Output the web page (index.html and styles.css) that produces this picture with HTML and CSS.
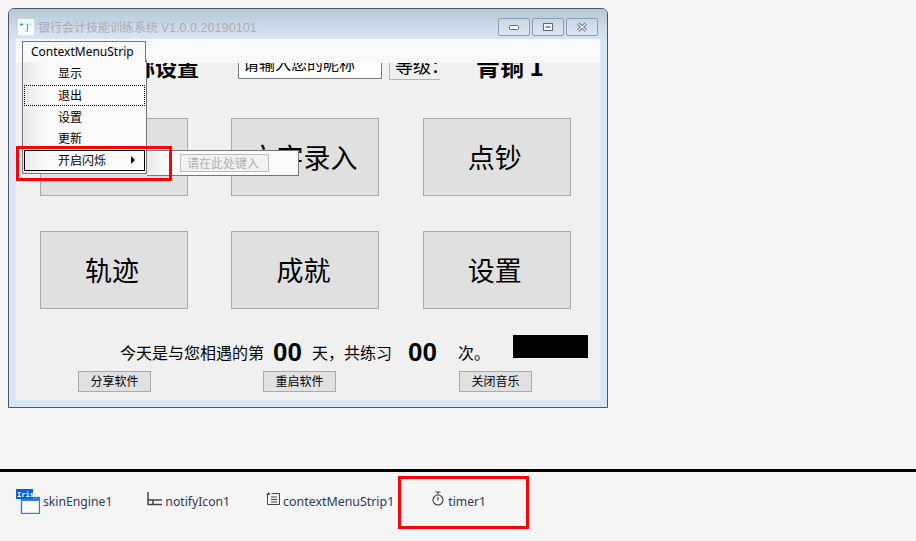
FILE: index.html
```html
<!DOCTYPE html>
<html lang="zh">
<head>
<meta charset="utf-8">
<title>银行会计技能训练系统</title>
<link rel="stylesheet" href="styles.css">
</head>
<body>
<main class="designer">
  <section class="window">
    <header class="titlebar">
      <svg class="logo" width="16" height="16" viewBox="0 0 16 16"><rect width="16" height="16" fill="#fff"/><path d="M2 5.500h3M3.500 4v3M8 5h1.500v7h-2M12.500 4.500l-.5 1.500" stroke="#19b5b5" stroke-width="1" fill="none"/></svg>
      <span class="title">银行会计技能训练系统 <span class="ver">V1.0.0.20190101</span></span>
      <div class="controls">
        <div class="ctl"><svg width="12" height="8" viewBox="0 0 12 8"><rect x="1.5" y="2.5" width="9" height="4" fill="#fff" stroke="#5b6b7d" rx="1"/></svg></div>
        <div class="ctl"><svg width="12" height="10" viewBox="0 0 12 10"><rect x="1.5" y="1.5" width="9" height="7" fill="#f4f6f8" stroke="#5b6b7d"/><rect x="3.5" y="4" width="5" height="2" fill="#8a98a8"/></svg></div>
        <div class="ctl"><svg width="12" height="10" viewBox="0 0 12 10"><path d="M2 1.500l8 7M10 1.500l-8 7" stroke="#5b6b7d" stroke-width="3"/><path d="M2 1.500l8 7M10 1.500l-8 7" stroke="#f4f6f8" stroke-width="1.200"/></svg></div>
      </div>
    </header>
    <div class="client">
      <div class="head-row">
        <h1 class="heading">昵称设置</h1>
        <div class="nick">请输入您的昵称</div>
        <div class="level-btn">等级：</div>
        <div class="level">青铜 1</div>
      </div>
      <div class="tiles">
        <div class="tile">打字</div>
        <div class="tile">文字录入</div>
        <div class="tile">点钞</div>
        <div class="tile">轨迹</div>
        <div class="tile">成就</div>
        <div class="tile">设置</div>
      </div>
      <div class="stats">
        <span class="s-a">今天是与您相遇的第</span>
        <b class="num n-a">00</b>
        <span class="s-b">天，共练习</span>
        <b class="num n-b">00</b>
        <span class="s-c">次。</span>
        <div class="black"></div>
      </div>
      <div class="actions">
        <div class="act">分享软件</div>
        <div class="act">重启软件</div>
        <div class="act">关闭音乐</div>
      </div>
      <div class="strip"></div>
    </div>
  </section>

  <div class="menu">
    <div class="item">显示</div>
    <div class="item dotted">退出</div>
    <div class="item">设置</div>
    <div class="item">更新</div>
    <div class="item active">开启闪烁<span class="arrow"></span></div>
  </div>
  <div class="menu-tab">ContextMenuStrip</div>
  <div class="submenu"><div class="typehere">请在此处键入</div></div>
  <div class="red red-a"></div>
</main>
<footer class="tray">
  <div class="comp c-skin">
    <svg width="24" height="25" viewBox="0 0 24 25"><rect x="5.500" y="8.500" width="18" height="16" fill="#fff" stroke="#2d7de8" stroke-width="1.400"/><rect x="5" y="8" width="19" height="4" fill="#2d7de8"/><rect x="0" y="0" width="17" height="10" fill="#0a5fe0"/><text x="1" y="8" class="iris">Iris</text></svg>
    <span>skinEngine1</span>
  </div>
  <div class="comp c-notify">
    <svg width="15" height="14" viewBox="0 0 15 14"><path d="M1 0v13M1 8h14M1 12.500h14M6 8v4" stroke="#444" stroke-width="1.500" fill="none"/></svg>
    <span>notifyIcon1</span>
  </div>
  <div class="comp c-menu">
    <svg width="14" height="13" viewBox="0 0 14 13"><path d="M1.500 3v9.500h12v-11h-8M5 5h6M5 7.500h6M5 10h6" stroke="#444" fill="none"/><path d="M0 3l3-3 1 3z" fill="#444"/></svg>
    <span>contextMenuStrip1</span>
  </div>
  <div class="comp c-timer">
    <svg width="12" height="15" viewBox="0 0 12 15"><circle cx="6" cy="9" r="5" fill="none" stroke="#444" stroke-width="1.200"/><path d="M3.500 1h5M6 1v3M6 6v3.500" stroke="#444" stroke-width="1.200"/></svg>
    <span>timer1</span>
  </div>
  <div class="red red-b"></div>
</footer>
</body>
</html>
```
FILE: styles.css
```css
* { box-sizing: border-box; }
html, body { margin: 0; padding: 0; }
body {
  width: 916px; height: 541px; overflow: hidden;
  background: #f5f5f5;
  font-family: "Noto Sans CJK SC", "Noto Sans", sans-serif;
  color: #000;
  display: flex; flex-direction: column;
}
.designer { position: relative; height: 469px; padding: 8px 0 0 8px; }

.window {
  width: 600px; height: 400px;
  border: 1px solid #555; border-radius: 6px 6px 0 0;
  background: #d8e5f2;
  display: flex; flex-direction: column;
  padding: 0 7px 7px;
}
.titlebar {
  height: 30px; margin: 0 -7px; padding: 10px 9px 0 9px;
  background: linear-gradient(#b8c7d7, #d8e6f3);
  border-radius: 5px 5px 0 0;
  display: flex; align-items: flex-start;
}
.logo { flex: none; }
.title {
  margin-left: 4px; font-size: 12px; line-height: 16px; color: #a9adb2;
  white-space: nowrap;
}
.ver { font-family: "Liberation Sans", sans-serif; font-size: 12.600px; }
.controls { margin-left: auto; margin-top: -1px; display: flex; gap: 2px; }
.ctl {
  width: 32px; height: 18px;
  border: 1px solid #8a9db5; border-radius: 2px;
  background: linear-gradient(#c9d6e3, #dbe7f3);
  display: flex; align-items: center; justify-content: center;
}
.client { position: relative; flex: 1; background: #f0f0f0; overflow: hidden; }

.strip { position: absolute; left: 0; top: 0; width: 100%; height: 24px; background: #f9f9f9; }

.head-row { display: flex; height: 41px; padding-top: 12px; }
.heading {
  margin: 3px 0 0 95px; width: 88px; height: 24px; font-size: 22px; line-height: 24px;
  font-weight: 700; white-space: nowrap;
}
.nick {
  margin-left: 39px; width: 144px; height: 28px;
  background: #fff; border: 1px solid #777;
  font-size: 16px; line-height: 22px; padding-left: 4px; white-space: nowrap; overflow: hidden;
}
.level-btn {
  margin: 4px 0 0 7px; width: 51px; height: 25px; overflow: hidden;
  background: #efefef; border: 1px solid #b4b4b4; border-right: 0; border-top: 0;
  font-size: 18px; line-height: 21px; padding-left: 5px; white-space: nowrap;
}
.level { margin: 2px 0 0 36px; height: 26px; font-size: 24px; line-height: 26px; font-weight: 700; white-space: nowrap; }

.tiles {
  margin: 38px 0 0 24px; width: 531px;
  display: grid; grid-template-columns: repeat(3, 148px); column-gap: 43.400px; row-gap: 35px;
  grid-auto-rows: 78px;
}
.tile {
  background: #e0e0e0; border: 1px solid #aaa;
  display: flex; align-items: center; justify-content: center;
  font-size: 27px; padding: 0 4px 2px 0;
}
.stats { position: relative; height: 29px; margin-top: 26px; display: flex; align-items: flex-end; }
.stats span { font-size: 16px; line-height: 24px; white-space: nowrap; }
.s-a { margin-left: 104px; width: 144px; }
.num { font-family: "Liberation Sans", sans-serif; font-size: 26px; line-height: 30px; font-weight: 700; margin-bottom: -3px; }
.n-a { margin-left: 9px; width: 30px; }
.s-b { margin-left: 9px; width: 80px; }
.n-b { margin-left: 16px; width: 30px; }
.s-c { margin-left: 20px; width: 40px; }
.black { position: absolute; left: 497px; top: 0; width: 75px; height: 23px; background: #000; }

.actions { display: flex; margin-top: 7px; padding-left: 62px; position: relative; }
.act {
  width: 73px; height: 21px; background: #e1e1e1; border: 1px solid #aaa;
  font-size: 12px; line-height: 18px; text-align: center;
}
.act + .act { margin-left: 112px; }
.act:last-child { margin-left: 123px; }

.menu-tab {
  position: absolute; left: 22px; top: 41px; width: 124px; height: 21px;
  background: linear-gradient(#f9f9f9 18px, #fbfbfb);
  border: 1px solid #777; border-bottom: 0;
  font-family: "Noto Sans", sans-serif; font-size: 12px; line-height: 20px; padding-left: 8px; white-space: nowrap;
}
.menu {
  position: absolute; left: 22px; top: 60px; width: 125px; height: 114px;
  background: linear-gradient(90deg, #e9e9e9, #fafafa 24px, #fbfbfb 24px);
  border: 1px solid #777; padding: 2px 1px;
  display: flex; flex-direction: column; gap: 1px;
}
.item { height: 21px; padding-left: 33px; font-size: 12px; line-height: 17px; position: relative; border: 1px solid transparent; }
.dotted { border: 1px dotted #000; }
.active { border: 1px solid #000; }
.arrow {
  position: absolute; right: 9px; top: 5px; width: 0; height: 0;
  border-left: 4px solid #000; border-top: 4px solid transparent; border-bottom: 4px solid transparent;
}
.submenu {
  position: absolute; left: 147px; top: 150px; width: 152px; height: 26px;
  background: linear-gradient(90deg, #e9e9e9, #fbfbfb 22px);
  border: 1px solid #777; border-left: 0; padding: 3px 0 0 33px;
}
.typehere {
  width: 89px; height: 18px; background: #f2f2f2; border: 1px solid #bbb;
  font-size: 12px; line-height: 16px; color: #b0b0b0; padding-left: 6px; white-space: nowrap;
}
.red { position: absolute; border: 3px solid #f00; pointer-events: none; }
.red-a { left: 16px; top: 146px; width: 156px; height: 35px; }
.red-b { left: 398px; top: 4px; width: 131px; height: 53px; }

.tray {
  position: relative; flex: 1;
  border-top: 3px solid #000;
  display: flex; align-items: flex-start;
}
.comp { display: flex; align-items: center; font-size: 12.200px; color: #303a50; font-family: "Noto Sans", sans-serif; white-space: nowrap; height: 20px; margin-top: 19px; }
.comp svg { flex: none; }
.c-skin { margin-left: 16px; gap: 3px; }
.c-notify { margin-left: 35px; gap: 3px; }
.c-menu { margin-left: 36px; gap: 3px; font-size: 12.400px; }
.c-timer { margin-left: 38px; gap: 4px; }
.c-notify svg, .c-menu svg, .c-timer svg { margin-bottom: 5px; }
.iris { font-family: "DejaVu Sans Mono", monospace; font-size: 7px; fill: #fff; font-weight: 700; }
```
